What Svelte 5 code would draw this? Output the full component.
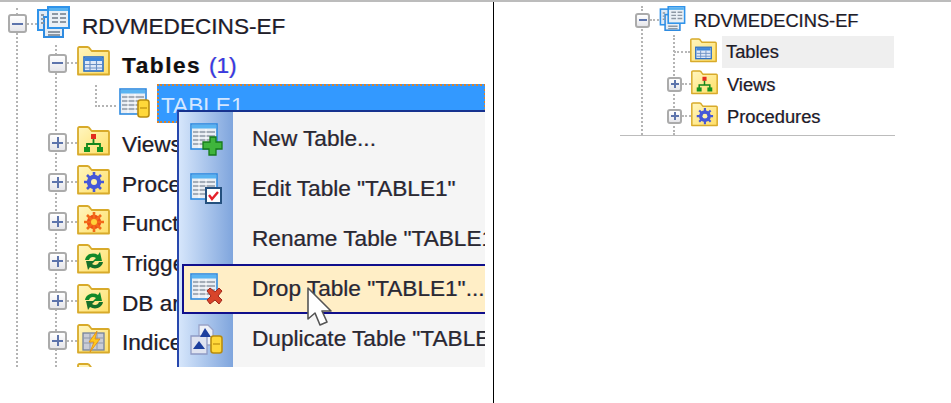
<script>
  const folders = [
    { label: 'Views', kind: 'views' },
    { label: 'Procedures', kind: 'procs' },
    { label: 'Functions', kind: 'funcs' },
    { label: 'Triggers', kind: 'trig' },
    { label: 'DB and', kind: 'trig' },
    { label: 'Indices', kind: 'index' },
    { label: 'Other', kind: 'none' }
  ];
  const menu = [
    { label: 'New Table...', kind: 'new' },
    { label: 'Edit Table "TABLE1"', kind: 'edit' },
    { label: 'Rename Table "TABLE1"', kind: 'none' },
    { label: 'Drop Table "TABLE1"...', kind: 'drop', active: true },
    { label: 'Duplicate Table "TABLE1"', kind: 'dup' }
  ];
</script>

{#snippet grid(x, y, w, h)}
  <rect x={x} y={y} width={w} height={h} fill="#e9eef4" stroke="#2f8be0" stroke-width="1.6"/>
  <rect x={x + 1} y={y + 1} width={w - 2} height="3.5" fill="#59b4f2"/>
  <path d="M{x + 2} {y + 8}h{w - 4}M{x + 2} {y + 12}h{w - 4}M{x + 2} {y + 16}h{w - 4}M{x + 2} {y + 20}h{w - 4}" stroke="#8d98a4" stroke-width="1.6"/>
  <path d="M{x + 8} {y + 5}v{h - 6}M{x + 15} {y + 5}v{h - 6}" stroke="#fff" stroke-width="1"/>
{/snippet}

{#snippet can(x, y)}
  <rect x={x} y={y} width="11" height="17" rx="2.5" fill="#ffd83a" stroke="#b98d10" stroke-width="1.6"/>
  <path d="M{x + 2} {y + 8}h7" stroke="#c79a15" stroke-width="1.4"/>
{/snippet}

{#snippet glyph(kind)}
  {#if kind === 'tables'}
    <rect x="7" y="11" width="19" height="14" fill="#dfe9f8" stroke="#2c6fc4" stroke-width="1.6"/>
    <rect x="8" y="12" width="17" height="3" fill="#3f87da"/>
    <path d="M8 18.5h17M8 22h17M13 15v9M19.5 15v9" stroke="#6a90c4" stroke-width="1.1"/>
  {:else if kind === 'views'}
    <rect x="14" y="8" width="5" height="5" fill="#e32a1f"/>
    <path d="M16.5 13v5M10 22v-4h13v4" fill="none" stroke="#15861c" stroke-width="1.8"/>
    <rect x="7" y="21" width="6" height="5" fill="#16941e"/>
    <rect x="20" y="21" width="6" height="5" fill="#16941e"/>
  {:else if kind === 'procs' || kind === 'funcs'}
    <circle cx="17" cy="17" r="5.2" fill="none" stroke={kind === 'procs' ? '#4658d8' : '#ee4a18'} stroke-width="4"/>
    <path d="M17 7v20M7 17h20M10 10l14 14M24 10L10 24" stroke={kind === 'procs' ? '#4658d8' : '#f26a18'} stroke-width="2.6"/>
    <circle cx="17" cy="17" r="3" fill={kind === 'procs' ? '#fff2a8' : '#ffd23a'}/>
  {:else if kind === 'trig'}
    <path d="M8 16c1-6 8-8 13-5l2-3 2 9-9 0 3-3c-3-2-6-1-7 2z" fill="#108a2a"/>
    <path d="M26 18c-1 6-8 8-13 5l-2 3-2-9 9 0-3 3c3 2 6 1 7-2z" fill="#15702a"/>
  {:else if kind === 'index'}
    <rect x="6" y="9" width="21" height="17" fill="#c9ccd6" stroke="#74829a" stroke-width="1.3"/>
    <path d="M7 14h19M7 19h19M13 10v15M20 10v15" stroke="#8f98a8" stroke-width="1"/>
    <path d="M20 7l-8 11h5l-4 10 10-13h-5z" fill="#ffc81e" stroke="#e28a10" stroke-width=".8"/>
  {/if}
{/snippet}

{#snippet folder(kind, cls)}
  <svg class="ic {cls}" viewBox="0 0 33 30" aria-hidden="true">
    <defs>
      <linearGradient id="fg" x1="0" y1="0" x2="1" y2="1">
        <stop offset="0" stop-color="#fff6c0"/>
        <stop offset="1" stop-color="#ffdf68"/>
      </linearGradient>
    </defs>
    <path d="M1 28.5V2.5q0-1.5 1.5-1.5h8q1.5 0 3 2.5l1.2 1.5H31q1 0 1 1v22.5z" fill="url(#fg)" stroke="#d8aa2a" stroke-width="1.8" stroke-linejoin="round"/>
    {@render glyph(kind)}
  </svg>
{/snippet}

{#snippet dbIcon(cls)}
  <svg class="ic {cls}" viewBox="0 0 33 32" aria-hidden="true">
    <rect x="1" y="4" width="17" height="20" fill="#dfeaf6" stroke="#2f93ea" stroke-width="2"/>
    <rect x="7" y="11" width="19" height="20" fill="#e7edf4" stroke="#2f8be0" stroke-width="2"/>
    <rect x="11" y="1" width="21" height="21" fill="#eaf0f6" stroke="#2f93ea" stroke-width="2"/>
    <rect x="12" y="2" width="19" height="3" fill="#58b2f0"/>
    <path d="M15 8h6M23 8h6M15 12h6M23 12h6M15 16h6M23 16h6M11 26h12M11 29h12M4 9h3M4 13h3M4 17h3" stroke="#8d98a4" stroke-width="1.8"/>
  </svg>
{/snippet}

{#snippet menuIcon(kind)}
  <svg class="mi" viewBox="0 0 33 33" aria-hidden="true">
    {#if kind === 'new'}
      {@render grid(1, 1, 26, 25)}
      <path d="M20 14h6v5h6v7h-6v6h-7v-6h-6v-7h7z" fill="#3fb53c" stroke="#167a1a" stroke-width="1.3"/>
    {:else if kind === 'edit'}
      {@render grid(1, 1, 26, 25)}
      <rect x="16" y="15" width="15" height="15" fill="#fff" stroke="#24507e" stroke-width="2"/>
      <path d="M19 22l3 4 6-7" fill="none" stroke="#e5202a" stroke-width="2.4"/>
    {:else if kind === 'drop'}
      {@render grid(1, 1, 26, 25)}
      <path d="M17 18l3-3 5 4 4-4 3 3-4 5 4 4-3 4-4-4-5 4-3-4 4-4z" fill="#d8442a" stroke="#a0281c" stroke-width="1"/>
    {:else if kind === 'dup'}
      <path d="M9 2h9l5 5v15H9z" fill="#eef1f8" stroke="#9aa4c8" stroke-width="1.3"/>
      <path d="M1 13h16v18H1z" fill="#dfe3f0" stroke="#8f9ac4" stroke-width="1.3"/>
      <path d="M9 18l6 8H3z" fill="#1d3f9e"/>
      <path d="M15 5l6 9H10z" fill="#1d3f9e"/>
      {@render can(21, 13)}
    {/if}
  </svg>
{/snippet}

<div class="stage">
  <section class="left">
    <div class="tree">
      <i class="guide g1"></i>
      <i class="guide g2"></i>
      <i class="elbow"></i>

      <div class="row root">
        <span class="exp"></span><i class="dash"></i>
        {@render dbIcon('big')}
        <span class="t">RDVMEDECINS-EF</span>
      </div>
      <div class="row lvl2">
        <span class="exp"></span><i class="dash"></i>
        {@render folder('tables', 'big')}
        <span class="t bold">Tables <em>(1)</em></span>
      </div>
      <div class="row lvl3">
        <svg class="tbl" viewBox="0 0 32 30" aria-hidden="true">
          {@render grid(1, 1, 26, 25)}
          {@render can(19, 12)}
        </svg>
        <span class="sel">TABLE1</span>
      </div>
      {#each folders as f}
        <div class="row lvl2">
          <span class="exp plus"></span><i class="dash"></i>
          {@render folder(f.kind, 'big')}
          <span class="t">{f.label}</span>
        </div>
      {/each}

      <div class="menu">
        {#each menu as m}
          <div class="item" class:active={m.active}>
            {@render menuIcon(m.kind)}
            <span class="t">{m.label}</span>
          </div>
        {/each}
      </div>

      <svg class="cursor" viewBox="0 0 26 40" aria-hidden="true">
        <path d="M1 1v31l7-6 5 12 7-3-5-11h9z" fill="#fff" stroke="#555" stroke-width="1.6" stroke-linejoin="round"/>
      </svg>
    </div>
  </section>

  <section class="right">
    <div class="small">
      <i class="sguide s1"></i>
      <i class="sguide s2"></i>
      <div class="srow sroot">
        <span class="exp sm"></span><i class="dash sd"></i>
        {@render dbIcon('mid')}
        <span class="t st">RDVMEDECINS-EF</span>
      </div>
      <div class="srow slvl">
        <i class="dash long"></i>
        {@render folder('tables', 'mid')}
        <span class="t st hl">Tables</span>
      </div>
      <div class="srow slvl">
        <span class="exp sm plus"></span><i class="dash sd"></i>
        {@render folder('views', 'mid')}
        <span class="t st">Views</span>
      </div>
      <div class="srow slvl">
        <span class="exp sm plus"></span><i class="dash sd"></i>
        {@render folder('procs', 'mid')}
        <span class="t st">Procedures</span>
      </div>
    </div>
  </section>
</div>

<style>
  :global(body) { margin: 0; background: #fff; }
  .stage {
    width: 951px; height: 403px; box-sizing: border-box;
    border-top: 2px solid #bcbcbc;
    display: flex; overflow: hidden;
    font-family: "Liberation Sans", Arial, sans-serif;
    color: #1f1f2a;
  }
  .left { width: 494px; height: 401px; box-sizing: border-box; border-right: 1px solid #000; flex: none; }
  .tree {
    position: relative; width: 485px; height: 365px;
    padding-top: 2px; box-sizing: border-box; overflow: hidden; background: #fff;
  }
  .t {
    white-space: nowrap; font-size: 22.6px; line-height: 1;
    text-shadow: -.6px 0 rgba(255,130,20,.3), .6px 0 rgba(20,120,255,.3), 0 0 .6px rgba(30,30,40,.35);
  }
  .ic, .tbl, .mi { display: block; flex: none; }
  .row { height: 39.6px; display: flex; align-items: center; position: relative; }
  .row .t { position: relative; top: 3px; margin-left: 12px; }
  .root { padding-left: 8px; }
  .lvl2 { padding-left: 48px; }
  .lvl3 { padding-left: 119px; }
  .big { width: 33px; height: 30px; position: relative; top: -2px; }
  .root .big { height: 32px; }
  .tbl { width: 32px; height: 30px; }
  .exp {
    position: relative; flex: none; z-index: 1;
    width: 19px; height: 19px; box-sizing: border-box;
    border: 2px solid #ababab; border-radius: 3px;
    background: linear-gradient(#fff, #e6e6ea);
  }
  .exp::before {
    content: ""; position: absolute; left: 2px; right: 2px; top: 6.5px; height: 2px; background: #5d74ac;
  }
  .exp.plus::after {
    content: ""; position: absolute; top: 2px; bottom: 2px; left: 6.5px; width: 2px; background: #5d74ac;
  }
  .exp.sm { width: 15px; height: 15px; }
  .exp.sm::before { top: 4.5px; left: 1.5px; right: 1.5px; }
  .exp.sm.plus::after { left: 4.5px; top: 1.5px; bottom: 1.5px; }
  .dash { flex: none; width: 10px; height: 0; border-top: 2px dotted #b8b8b8; }
  .dash.sd { width: 9px; }
  .dash.long { width: 16px; margin-left: 7px; }
  .bold { font-weight: 700; letter-spacing: 1.55px; color: #111; }
  .bold em { font-style: normal; font-weight: 400; color: #3a3ae0; letter-spacing: 0; }
  .sel {
    margin-left: 6px; flex: none; width: 329px; height: 39px; box-sizing: border-box;
    position: relative; top: 1px;
    background: #3399ff; border: 2px dotted #d9822b;
    color: #d4e7ff; font-size: 22.6px; line-height: 39px; padding-left: 2px;
  }
  .guide { position: absolute; border-left: 2px dotted #b4b4b4; }
  .g1 { left: 16px; top: 6px; bottom: 0; }
  .g2 { left: 55px; top: 43px; bottom: 0; }
  .elbow {
    position: absolute; left: 95px; top: 83px; width: 19px; height: 20px;
    border-left: 2px dotted #b4b4b4; border-bottom: 2px dotted #b4b4b4;
  }
  .menu {
    position: absolute; left: 177px; top: 108px; right: 0; bottom: 0;
    box-sizing: border-box; padding-top: 2px;
    border-left: 2px solid #2747ad; border-top: 2px solid #16328f;
    background: linear-gradient(90deg, #d6e6fb, #7fa5dd) 0 0 / 54px 100% no-repeat #f5f5f5;
  }
  .item {
    height: 50px; box-sizing: border-box; margin-left: 3px;
    display: flex; align-items: center; padding-left: 6px;
    border: 2px solid transparent; border-right: 0;
  }
  .item .t { margin-left: 29px; position: relative; top: 0; color: #2a2a33; }
  .item.active { background: #ffeec6; border-color: #100f8c; }
  .mi { width: 33px; height: 33px; }
  .cursor { position: absolute; left: 307px; top: 285px; width: 26px; height: 40px; }

  .right { flex: none; width: 275px; margin-left: 126px; height: 133px; border-bottom: 1px solid #bcbcbc; }
  .small { position: relative; height: 133px; padding-top: 2px; box-sizing: border-box; overflow: hidden; }
  .srow { height: 32px; display: flex; align-items: center; position: relative; }
  .sroot { padding-left: 15px; }
  .slvl { padding-left: 47px; }
  .mid { width: 27px; height: 25px; position: relative; top: -2px; }
  .st { font-size: 18.3px; position: relative; top: 1px; margin-left: 8px; }
  .slvl .st { margin-left: 9px; }
  .hl { flex: none; width: 172px; margin-left: 5px !important; height: 32px; line-height: 32px; padding-left: 4px; box-sizing: border-box; background: #efefef; top: 0; }
  .sguide { position: absolute; border-left: 2px dotted #b4b4b4; }
  .s1 { left: 21px; top: 4px; bottom: 0; }
  .s2 { left: 53px; top: 33px; bottom: 0; }
</style>
